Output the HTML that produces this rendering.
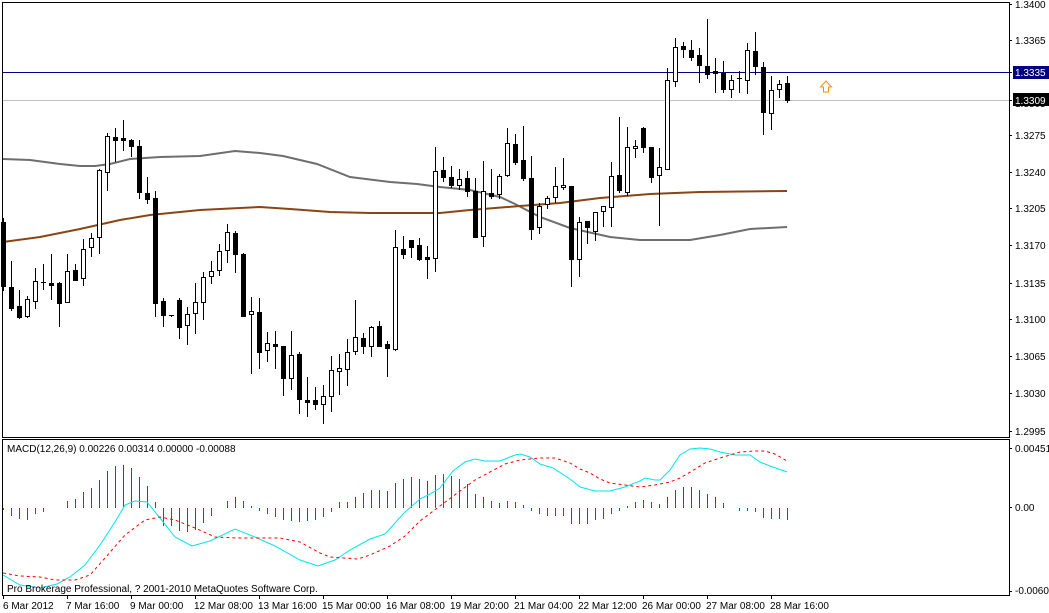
<!DOCTYPE html>
<html><head><meta charset="utf-8"><style>
html,body{margin:0;padding:0;background:#fff;width:1049px;height:613px;overflow:hidden}
svg{display:block}
text{font-family:"Liberation Sans",sans-serif;font-size:10px;fill:#000}
</style></head><body>
<svg id="s" width="1049" height="613" viewBox="0 0 1049 613" xmlns="http://www.w3.org/2000/svg" shape-rendering="crispEdges">
<rect width="1049" height="613" fill="#fff"/>
<g id="main"></g>
<!-- frames -->
<rect x="2.5" y="2.5" width="1007" height="435" fill="none" stroke="#000" stroke-width="1"/>
<rect x="2.5" y="439.5" width="1007" height="156" fill="none" stroke="#000" stroke-width="1"/>
<g font-size="10">
<text x="1015" y="8">1.3400</text>
<text x="1015" y="44">1.3365</text>
<text x="1015" y="139">1.3275</text>
<text x="1015" y="176">1.3240</text>
<text x="1015" y="212">1.3205</text>
<text x="1015" y="249">1.3170</text>
<text x="1015" y="287">1.3135</text>
<text x="1015" y="323">1.3100</text>
<text x="1015" y="360">1.3065</text>
<text x="1015" y="397">1.3030</text>
<text x="1015" y="435">1.2995</text>
<text x="1015" y="107">1.3305</text>
<rect x="1013" y="66" width="36" height="13" fill="#000080"/>
<text x="1015" y="76" style="fill:#fff">1.3335</text>
<rect x="1013" y="93" width="36" height="13" fill="#000"/>
<text x="1015" y="104" style="fill:#fff">1.3309</text>
<text x="1015" y="452">0.00451</text>
<text x="1015" y="511">0.00</text>
<text x="1015" y="594">-0.00608</text>
<text x="7" y="452">MACD(12,26,9) 0.00226 0.00314 0.00000 -0.00088</text>
<text x="7" y="592">Pro Brokerage Professional, ? 2001-2010 MetaQuotes Software Corp.</text>
<text x="3" y="609">6 Mar 2012</text>
<text x="66" y="609">7 Mar 16:00</text>
<text x="130" y="609">9 Mar 00:00</text>
<text x="194" y="609">12 Mar 08:00</text>
<text x="258" y="609">13 Mar 16:00</text>
<text x="322" y="609">15 Mar 00:00</text>
<text x="386" y="609">16 Mar 08:00</text>
<text x="450" y="609">19 Mar 20:00</text>
<text x="514" y="609">21 Mar 04:00</text>
<text x="578" y="609">22 Mar 12:00</text>
<text x="642" y="609">26 Mar 00:00</text>
<text x="706" y="609">27 Mar 08:00</text>
<text x="770" y="609">28 Mar 16:00</text>
</g>
<path d="M826 81 L831.5 87 L828.5 87 L828.5 92 L823.5 92 L823.5 87 L820.5 87 Z" fill="none" stroke="#ff8c00" stroke-width="1" shape-rendering="auto"/>
</svg>
<script>
var NS="http://www.w3.org/2000/svg",g=document.getElementById('main');
function el(t,a){var e=document.createElementNS(NS,t);for(var k in a)e.setAttribute(k,a[k]);g.appendChild(e);return e;}
// MAs
function pl(pts,c,w,dash,sr){var d='M'+pts.map(function(p){return p[0]+' '+p[1]}).join(' L');var a={d:d,fill:'none',stroke:c,'stroke-width':w,'shape-rendering':sr||'auto'};if(dash)a['stroke-dasharray']=dash;el('path',a);}
el('rect',{x:3,y:72,width:1006,height:1,fill:'#000080'});
el('rect',{x:3,y:100,width:1006,height:1,fill:'#c0c0c0'});
pl([[3,159],[30,160],[60,164],[80,166],[95,166],[110,164],[130,159],[160,157],[200,156],[235,151],[260,153],[283,156],[317,164],[350,177],[390,182],[417,184],[440,187],[470,190],[500,197],[515,204],[540,217],[570,228],[610,237],[640,240],[690,240],[720,235],[750,229],[787,227]],'#6e6e6e',2);
pl([[3,242],[40,237],[80,229],[120,220],[150,215],[200,210],[260,207],[290,209],[330,212],[370,213],[440,213],[470,210],[520,206],[560,203],[600,198],[650,194],[700,192],[787,191]],'#8b4513',2);
var C=[[218,222,286,290,0],[261,287,308,310,0],[290,306,317,318,0],[296,299,316,317,1],[268,281,301,308,1],[264,282,283,289,2],[254,283,285,299,0],[282,283,303,326,0],[254,271,302,302,1],[264,270,280,280,0],[239,249,278,285,1],[233,238,247,256,1],[169,170,237,253,1],[133,136,172,190,1],[128,137,140,161,0],[120,138,140,150,0],[139,140,146,156,0],[140,146,192,198,0],[177,193,199,203,0],[191,198,303,316,0],[298,301,315,326,0],[315,315,316,316,2],[298,300,327,338,0],[307,314,325,344,1],[283,302,313,333,1],[272,277,302,319,1],[261,271,276,283,1],[244,251,270,275,1],[224,232,250,262,1],[231,233,254,272,0],[253,254,316,316,0],[297,311,314,373,1],[298,312,352,368,0],[332,343,350,361,1],[331,344,346,368,0],[346,346,378,395,0],[331,355,378,389,1],[352,354,399,413,0],[377,400,402,416,0],[387,400,404,409,0],[385,396,404,423,1],[356,370,396,411,1],[354,368,371,394,1],[339,352,369,385,1],[300,337,351,354,1],[333,338,346,353,0],[326,327,346,356,1],[321,326,346,346,0],[341,344,348,376,0],[230,247,349,350,1],[236,249,254,258,0],[240,240,247,257,0],[238,245,259,260,0],[246,257,259,278,0],[147,171,258,271,1],[157,170,177,181,0],[166,177,185,187,0],[169,179,185,189,1],[171,178,191,196,0],[178,191,237,237,0],[161,191,236,246,1],[169,193,196,198,0],[174,176,194,198,1],[128,143,175,176,1],[134,144,162,164,0],[126,160,178,180,0],[156,178,229,239,0],[203,206,227,233,1],[196,198,204,208,1],[167,186,197,202,1],[158,185,187,189,1],[186,186,259,286,0],[217,222,259,276,1],[221,221,227,243,0],[213,212,231,240,1],[206,206,211,226,1],[162,176,207,226,1],[117,175,190,192,0],[127,147,192,195,1],[140,146,148,157,1],[127,128,147,152,0],[147,147,177,182,0],[148,167,175,225,1],[68,80,169,169,1],[38,47,81,86,1],[42,46,49,57,0],[40,50,57,60,0],[48,55,65,82,0],[19,66,74,78,0],[58,71,73,92,0],[61,73,89,92,0],[75,80,89,97,1],[71,78,78,92,2],[43,50,80,93,1],[32,51,66,74,0],[62,67,112,134,0],[76,90,113,129,1],[80,84,89,97,1],[76,83,100,102,0]];
C.forEach(function(c,i){var x=3+8*i;
 el('rect',{x:x,y:c[0],width:1,height:Math.max(1,c[3]-c[0]+1),fill:'#000'});
 if(c[4]==1){el('rect',{x:x-1.5,y:c[1]+0.5,width:4,height:Math.max(1,c[2]-c[1]),fill:'#fff',stroke:'#000','stroke-width':1});}
 else if(c[4]==2){el('rect',{x:x-2,y:c[1],width:5,height:1,fill:'#000'});}
 else{el('rect',{x:x-2,y:c[1],width:5,height:Math.max(1,c[2]-c[1]+1),fill:'#000'});}
});
var H=[-2,-8,-11,-12,-6,-4,0,0,7,9,16,20,28,37,42,43,40,31,22,6,-18,-18,-23,-24,-22,-15,-8,0,7,11,7,2,-3,-6,-9,-12,-13,-14,-13,-12,-9,-4,6,6,11,15,18,18,17,25,29,31,29,27,33,34,32,29,24,14,11,7,5,7,6,3,-3,-6,-8,-8,-8,-16,-16,-16,-12,-11,-6,-3,2,6,8,6,4,11,18,21,21,18,14,11,5,0,-3,-3,-4,-10,-11,-11,-12];
H.forEach(function(h,i){if(!h)return;var x=3+8*i;if(h>0)el('rect',{x:x,y:508-h,width:1,height:h,fill:'#008000'});else el('rect',{x:x,y:508,width:1,height:-h,fill:'#ff0000'});});
pl([[3,575],[20,585],[40,588],[57,584],[70,577],[85,565],[100,545],[115,522],[125,505],[135,501],[147,502],[160,518],[175,537],[192,546],[210,541],[235,529],[255,537],[275,546],[300,560],[318,566],[335,560],[350,550],[370,539],[385,534],[395,523],[405,512],[420,499],[430,494],[440,488],[453,471],[465,462],[475,459],[485,461],[500,461],[515,455],[520,454],[530,457],[540,464],[553,468],[570,479],[580,487],[595,491],[610,491],[625,487],[640,481],[645,478],[655,480],[660,480],[670,470],[680,455],[690,449],[700,448],[710,449],[720,452],[735,455],[750,455],[760,462],[770,466],[787,472]],'#00e5ee',1);
pl([[3,573],[20,576],[40,577],[55,580],[75,580],[90,575],[105,558],[125,535],[145,520],[160,517],[175,520],[195,528],[215,537],[240,538],[280,538],[300,542],[320,553],[330,557],[358,559],[370,555],[390,546],[405,536],[420,521],[440,506],[460,491],[475,480],[490,472],[505,464],[520,460],[540,458],[555,458],[570,463],[580,469],[590,473],[600,479],[610,483],[625,485],[640,487],[655,485],[670,482],[680,478],[692,471],[705,463],[720,458],[740,452],[755,451],[765,451],[775,454],[787,461]],'#ff0000',1,'3,3');
// axis ticks
[4,40,72,100,135,172,208,245,283,319,356,393,431,448,507,591].forEach(function(y){el('rect',{x:1009,y:y,width:3,height:1,fill:'#000'});});
for(var k=0;k<13;k++)el('rect',{x:3+64*k,y:596,width:1,height:3,fill:'#000'});
</script>
</body></html>
